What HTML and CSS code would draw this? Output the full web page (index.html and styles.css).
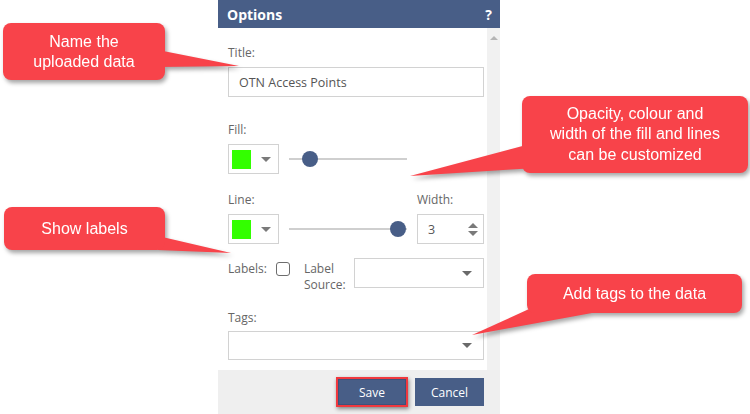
FILE: index.html
```html
<!DOCTYPE html>
<html lang="en">
<head>
    <meta charset="UTF-8">
    <title>Options</title>
    <link rel="stylesheet" href="styles.css">
</head>
<body>
    <div class="page">
        <div class="panel">
            <div class="panel-head">
                <span>Options</span>
                <span class="help">?</span>
            </div>
            <div class="panel-body">
                <form class="form">
                    <label class="lbl">Title:</label>
                    <div class="input">OTN Access Points</div>

                    <div class="grid fill-grid">
                        <label class="lbl">Fill:</label>
                        <span></span>
                        <span></span>
                        <div class="color-pick"><span class="swatch"></span><span class="caret"></span></div>
                        <div class="slider"><span class="thumb" style="left: 21px"></span></div>
                        <span></span>
                    </div>

                    <div class="grid line-grid">
                        <label class="lbl">Line:</label>
                        <span></span>
                        <label class="lbl">Width:</label>
                        <div class="color-pick"><span class="swatch"></span><span class="caret"></span></div>
                        <div class="slider"><span class="thumb" style="left: 109px"></span></div>
                        <div class="number">
                            <span>3</span>
                            <span class="spin"><span class="up"></span><span class="down"></span></span>
                        </div>
                    </div>

                    <div class="labels-row">
                        <label class="lbl">Labels:</label>
                        <span class="checkbox"></span>
                        <label class="lbl source">Label<br>Source:</label>
                        <div class="select small"><span class="caret"></span></div>
                    </div>

                    <label class="lbl tags-lbl">Tags:</label>
                    <div class="select tags"><span class="caret"></span></div>
                </form>
                <div class="scrollbar"><span class="scroll-up"></span></div>
            </div>
            <div class="panel-foot">
                <button class="btn btn-save" type="button">Save</button>
                <button class="btn" type="button">Cancel</button>
            </div>
        </div>

        <div class="callouts">
            <svg class="tails" width="750" height="414" viewBox="0 0 750 414">
                <polygon points="158,50 239,66 158,67" />
                <polygon points="530,144 410,176 536,168" />
                <polygon points="158,236 231,253 158,250" />
                <polygon points="540,304 472,335 592,313" />
            </svg>
            <div class="callout c-name">Name the<br>uploaded data</div>
            <div class="callout c-style">Opacity, colour and<br>width of the fill and lines<br>can be customized</div>
            <div class="callout c-labels">Show labels</div>
            <div class="callout c-tags">Add tags to the data</div>
        </div>
    </div>
</body>
</html>
```

FILE: styles.css
```css
body {
    margin: 0;
    background: #fff;
    font-family: "Open Sans", "Noto Sans", sans-serif;
}

.page {
    position: relative;
    width: 750px;
    height: 414px;
    padding-left: 218px;
    box-sizing: border-box;
    overflow: hidden;
}

.panel {
    width: 282px;
    height: 414px;
    display: flex;
    flex-direction: column;
}

.panel-head {
    height: 28px;
    flex: none;
    background: #485e87;
    color: #fff;
    font-weight: bold;
    font-size: 14px;
    display: flex;
    align-items: center;
    justify-content: space-between;
    padding: 0 8px 0 9px;
}

.help {
    font-size: 14px;
}

.panel-body {
    flex: 1;
    display: flex;
    min-height: 0;
}

.form {
    flex: 1;
    margin: 0;
    padding: 17px 3px 0 10px;
    display: flex;
    flex-direction: column;
}

.scrollbar {
    width: 13px;
    background: #f1f1f1;
    display: flex;
    justify-content: center;
}

.scroll-up {
    margin-top: 8px;
    width: 0;
    height: 0;
    border-left: 4px solid transparent;
    border-right: 4px solid transparent;
    border-bottom: 4px solid #b5b5b5;
}

.lbl {
    font-size: 12px;
    line-height: 15px;
    color: #666;
    display: block;
    margin-bottom: 7px;
}

.input {
    height: 30px;
    border: 1px solid #d2d2d2;
    box-sizing: border-box;
    padding: 0 10px;
    font-size: 12.5px;
    color: #555;
    display: flex;
    align-items: center;
}

.grid {
    display: grid;
    grid-template-columns: 51px 118px 67px;
    column-gap: 10px;
}

.fill-grid {
    margin-top: 25px;
}

.line-grid {
    margin-top: 18px;
}

.color-pick {
    height: 30px;
    border: 1px solid #d2d2d2;
    box-sizing: border-box;
    display: flex;
    align-items: center;
    padding-left: 3px;
    gap: 10px;
}

.swatch {
    width: 19px;
    height: 19px;
    background: #33ff00;
}

.caret {
    width: 0;
    height: 0;
    border-left: 5px solid transparent;
    border-right: 5px solid transparent;
    border-top: 5px solid #7a7a7a;
}

.slider {
    position: relative;
    align-self: center;
    height: 2px;
    background: #cfcfcf;
}

.thumb {
    position: absolute;
    top: -7px;
    width: 16px;
    height: 16px;
    margin-left: -8px;
    border-radius: 50%;
    background: #485e87;
}

.number {
    height: 30px;
    border: 1px solid #d2d2d2;
    box-sizing: border-box;
    display: flex;
    align-items: center;
    justify-content: space-between;
    padding: 0 5px 0 10px;
    font-size: 12.5px;
    color: #555;
}

.spin {
    display: flex;
    flex-direction: column;
    gap: 3px;
}

.spin .up,
.spin .down {
    width: 0;
    height: 0;
    border-left: 5px solid transparent;
    border-right: 5px solid transparent;
}

.spin .up {
    border-bottom: 5px solid #7a7a7a;
}

.spin .down {
    border-top: 5px solid #7a7a7a;
}

.labels-row {
    margin-top: 14px;
    height: 30px;
    display: flex;
    align-items: flex-start;
}

.labels-row .lbl {
    margin: 3px 0 0;
}

.checkbox {
    flex: none;
    width: 12px;
    height: 12px;
    border: 1.5px solid #6d6d6d;
    border-radius: 3px;
    margin: 4px 14px 0 9px;
}

.labels-row .source {
    line-height: 16px;
    margin-right: 8px;
}

.select {
    height: 30px;
    border: 1px solid #d2d2d2;
    box-sizing: border-box;
    display: flex;
    align-items: center;
    justify-content: flex-end;
    padding-right: 11px;
}

.select.small {
    flex: 1;
}

.select .caret {
    border-top-color: #6a6a6a;
}

.tags-lbl {
    margin-top: 22px;
    margin-bottom: 6px;
}

.tags {
    height: 29px;
}

.panel-foot {
    height: 44px;
    flex: none;
    background: #efefef;
    display: flex;
    align-items: center;
    justify-content: flex-end;
    gap: 7px;
    padding-right: 16px;
}

.btn {
    height: 28px;
    width: 69px;
    border: none;
    background: #485e87;
    color: #fff;
    font-family: "Open Sans", "Noto Sans", sans-serif;
    font-size: 12px;
    cursor: pointer;
}

.btn-save {
    width: 72px;
    height: 30px;
    border: 2px solid #f0383e;
    box-shadow: inset 0 0 0 1px #3e527a, 1px 2px 4px rgba(0, 0, 0, 0.45);
}

.callouts {
    position: absolute;
    inset: 0;
    pointer-events: none;
    filter: drop-shadow(2px 3px 2px rgba(0, 0, 0, 0.35));
}

.tails {
    position: absolute;
    left: 0;
    top: 0;
}

.tails polygon {
    fill: #f8434a;
}

.callout {
    position: absolute;
    background: #f8434a;
    border-radius: 8px;
    color: #fff;
    font-family: "Liberation Sans", Arial, sans-serif;
    font-size: 16px;
    line-height: 20px;
    text-align: center;
    display: flex;
    align-items: center;
    justify-content: center;
}

.c-name {
    left: 3px;
    top: 23px;
    width: 162px;
    height: 57px;
}

.c-style {
    left: 522px;
    top: 96px;
    width: 226px;
    height: 77px;
    line-height: 20.5px;
}

.c-labels {
    left: 4px;
    top: 207px;
    width: 161px;
    height: 43px;
}

.c-tags {
    left: 527px;
    top: 274px;
    width: 215px;
    height: 39px;
}
```
